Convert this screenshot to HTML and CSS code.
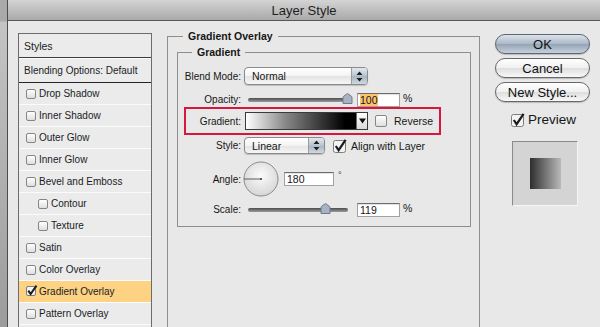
FILE: index.html
```html
<!DOCTYPE html>
<html lang="en">

<head>
  <meta charset="UTF-8">
  <title>Layer Style</title>
  <link rel="stylesheet" href="styles.css">
</head>

<body>

  <div class="desk">
    <div class="edge"></div>

    <div class="window">
      <div class="titlebar">Layer Style</div>

      <div class="dialog">

        <ul class="styles">
          <li class="head">Styles</li>
          <li class="blend">Blending Options: Default</li>
          <li><span class="box"></span>Drop Shadow</li>
          <li><span class="box"></span>Inner Shadow</li>
          <li><span class="box"></span>Outer Glow</li>
          <li><span class="box"></span>Inner Glow</li>
          <li><span class="box"></span>Bevel and Emboss</li>
          <li class="sub"><span class="box"></span>Contour</li>
          <li class="sub"><span class="box"></span>Texture</li>
          <li><span class="box"></span>Satin</li>
          <li><span class="box"></span>Color Overlay</li>
          <li class="on">
            <svg class="tick" width="12" height="12" viewBox="0 0 12 12">
              <rect x="0.5" y="1.5" width="9" height="9" rx="1.5" fill="#f4f4f4" stroke="#7c7c7c"/>
              <path d="M2.3 5.6 L4.6 9 L10.5 0.6" fill="none" stroke="#1c1c1c" stroke-width="2"/>
            </svg>Gradient Overlay
          </li>
          <li><span class="box"></span>Pattern Overlay</li>
          <li class="rest"></li>
        </ul>

        <fieldset class="group outer">
          <legend>Gradient Overlay</legend>

          <fieldset class="group inner">
            <legend>Gradient</legend>

            <div class="row r-blend">
              <span class="lbl">Blend Mode:</span>
              <div class="popup p-blend">
                <span class="val">Normal</span>
                <span class="stepper">
                  <svg width="7" height="11" viewBox="0 0 7 11">
                    <path d="M3.5 0.5 L6.5 4 L0.5 4 Z M3.5 10.5 L6.5 7 L0.5 7 Z" fill="#1e1e1e"/>
                  </svg>
                </span>
              </div>
            </div>

            <div class="row r-opacity">
              <span class="lbl">Opacity:</span>
              <div class="slider s-opacity">
                <div class="track"></div>
                <svg class="thumb" style="left: 94px" width="11" height="11" viewBox="0 0 11 11">
                  <path d="M1 10.5 L1 4.5 Q1 3.5 2 3 L5.5 0.5 L9 3 Q10 3.5 10 4.5 L10 10.5 Z" fill="#a7b3c2" stroke="#6f7b8a"/>
                </svg>
              </div>
              <span class="field f-pct"><mark>100</mark></span>
              <span class="unit">%</span>
            </div>

            <div class="row r-gradient">
              <span class="lbl">Gradient:</span>
              <div class="swatch">
                <span class="ramp"></span>
                <span class="drop">
                  <svg width="7" height="6" viewBox="0 0 7 6">
                    <path d="M0 0.5 L7 0.5 L3.5 5.5 Z" fill="#111"/>
                  </svg>
                </span>
              </div>
              <span class="box box-lg r-reverse"></span>
              <span class="opt">Reverse</span>
            </div>

            <div class="row r-style">
              <span class="lbl">Style:</span>
              <div class="popup p-style">
                <span class="val">Linear</span>
                <span class="stepper">
                  <svg width="7" height="11" viewBox="0 0 7 11">
                    <path d="M3.5 0.5 L6.5 4 L0.5 4 Z M3.5 10.5 L6.5 7 L0.5 7 Z" fill="#1e1e1e"/>
                  </svg>
                </span>
              </div>
              <svg class="tick tick-lg" width="14" height="14" viewBox="0 0 14 14">
                <rect x="0.5" y="1.5" width="12" height="12" rx="2" fill="#f3f3f3" stroke="#7c7c7c"/>
                <path d="M2.8 7 L5.6 11.2 L12.6 0.8" fill="none" stroke="#1c1c1c" stroke-width="2.2"/>
              </svg>
              <span class="opt">Align with Layer</span>
            </div>

            <div class="row r-angle">
              <span class="lbl">Angle:</span>
              <svg class="dial" width="36" height="36" viewBox="0 0 36 36">
                <defs>
                  <radialGradient id="dialFill" cx="50%" cy="40%" r="60%">
                    <stop offset="0" stop-color="#fbfbfb"/>
                    <stop offset="1" stop-color="#d6d6d6"/>
                  </radialGradient>
                </defs>
                <circle cx="18" cy="18" r="17" fill="url(#dialFill)" stroke="#8a8a8a"/>
                <line x1="1" y1="18" x2="18" y2="18" stroke="#5a5a5a"/>
                <rect x="17" y="17" width="2" height="2" fill="#5a5a5a"/>
              </svg>
              <span class="field f-angle">180</span>
              <span class="deg">°</span>
            </div>

            <div class="row r-scale">
              <span class="lbl">Scale:</span>
              <div class="slider s-scale">
                <div class="track"></div>
                <svg class="thumb" style="left: 72px" width="11" height="11" viewBox="0 0 11 11">
                  <path d="M1 10.5 L1 4.5 Q1 3.5 2 3 L5.5 0.5 L9 3 Q10 3.5 10 4.5 L10 10.5 Z" fill="#a7b3c2" stroke="#6f7b8a"/>
                </svg>
              </div>
              <span class="field f-pct">119</span>
              <span class="unit">%</span>
            </div>

          </fieldset>
        </fieldset>

        <div class="actions">
          <button class="btn btn-default">OK</button>
          <button class="btn">Cancel</button>
          <button class="btn">New Style...</button>

          <div class="preview-check">
            <svg width="14" height="14" viewBox="0 0 14 14">
              <rect x="0.5" y="1.5" width="12" height="12" rx="2" fill="#f3f3f3" stroke="#7c7c7c"/>
              <path d="M2.8 7 L5.6 11.2 L12.6 0.8" fill="none" stroke="#1c1c1c" stroke-width="2.2"/>
            </svg>
            <span>Preview</span>
          </div>

          <div class="preview">
            <span class="sample"></span>
          </div>
        </div>

      </div>
    </div>
  </div>

</body>

</html>
```

FILE: styles.css
```css
body {
  margin: 0;
  font-family: "Liberation Sans", Arial, sans-serif;
  font-size: 10px;
  color: #161616;
}

.desk {
  display: flex;
  width: 600px;
  height: 327px;
  overflow: hidden;
}

.edge {
  width: 7px;
  border-right: 1px solid #4c4c4c;
  background: linear-gradient(#a9a9a9 0, #a9a9a9 21px, #c4c4c4 22px, #9c9c9c 100%);
}

.window {
  flex: 1;
  display: flex;
  flex-direction: column;
  background: #e8e8e8;
}

.titlebar {
  height: 20px;
  border-bottom: 1px solid #575757;
  background: linear-gradient(#d4d4d4, #a9a9a9);
  text-align: center;
  font-size: 13px;
  line-height: 21px;
  color: #1e1e1e;
}

.dialog {
  flex: 1;
  display: flex;
  align-items: flex-start;
  gap: 15px;
  padding: 12px 0 0 10px;
}

/* left list */

.styles {
  list-style: none;
  margin: 0;
  padding: 0;
  width: 132px;
  flex-shrink: 0;
  border: 1px solid #6c6c6c;
  background: #ebebeb;
}

.styles li {
  display: flex;
  align-items: center;
  gap: 3px;
  height: 21px;
  padding-left: 7px;
  border-bottom: 1px solid #fbfbfb;
  color: #1a1c26;
}

.styles .head {
  height: 23px;
  padding-left: 5px;
  border-bottom: 1px solid #3d3d3d;
  font-size: 10.5px;
}

.styles .blend {
  height: 23px;
  padding-left: 5px;
  border-top: 1px solid #fafafa;
  border-bottom: 1px solid #262626;
}

.styles .sub {
  padding-left: 19px;
}

.styles .on {
  background: #fdd283;
  gap: 1px;
}

.box {
  display: inline-block;
  box-sizing: border-box;
  width: 10px;
  height: 10px;
  border: 1px solid #868686;
  border-radius: 2px;
  background: linear-gradient(#ffffff, #dedede);
  flex-shrink: 0;
}

.box-lg {
  width: 12px;
  height: 12px;
}

.tick {
  flex-shrink: 0;
  margin-top: -2px;
}

/* group boxes */

.group {
  margin: 0;
  padding: 0;
  min-width: 0;
  box-sizing: border-box;
  border: 1px solid #8e8e8e;
}

.group legend {
  padding: 0 5px;
  font-weight: bold;
  font-size: 10.5px;
  line-height: 13px;
}

.outer {
  width: 313px;
  height: 320px;
  margin-top: -3px;
  flex-shrink: 0;
}

.outer > legend {
  margin-left: 15px;
}

.inner {
  width: 294px;
  margin: 3px 0 0 9px;
  padding-bottom: 9px;
}

.inner > legend {
  margin-left: 14px;
}

/* rows */

.row {
  display: flex;
  align-items: center;
}

.lbl {
  width: 63px;
  margin-right: 3px;
  text-align: right;
  flex-shrink: 0;
}

.r-blend {
  height: 18px;
  margin-top: 8px;
}

.r-opacity {
  height: 15px;
  margin-top: 7px;
}

.r-gradient {
  box-sizing: border-box;
  width: 257px;
  height: 28px;
  margin-left: 6px;
  border: 2px solid #d8173f;
}

.r-gradient .lbl {
  width: 55px;
  margin-right: 4px;
}

.r-style {
  height: 17px;
  margin-top: 2px;
}

.r-angle {
  height: 36px;
  margin-top: 7px;
}

.r-scale {
  height: 15px;
  margin-top: 5px;
}

/* pop-up menus */

.popup {
  display: flex;
  box-sizing: border-box;
  height: 18px;
  border: 1px solid #8a8a8a;
  border-radius: 4px;
  overflow: hidden;
  background: linear-gradient(#ffffff 0, #f3f3f3 50%, #e3e3e3 51%, #f6f6f6 100%);
  box-shadow: 0 1px 1px rgba(0, 0, 0, 0.18);
}

.p-blend {
  width: 124px;
}

.p-style {
  width: 81px;
  height: 17px;
}

.popup .val {
  flex: 1;
  padding-left: 7px;
  line-height: 16px;
  font-size: 10.5px;
}

.stepper {
  display: flex;
  align-items: center;
  justify-content: center;
  width: 15px;
  border-left: 1px solid #9a9a9a;
  background: linear-gradient(#e4e9ef 0, #b9c3cf 50%, #a8b4c2 51%, #d0d8e1 100%);
}

/* sliders */

.slider {
  position: relative;
  height: 15px;
  margin-left: 4px;
}

.s-opacity {
  width: 104px;
}

.s-scale {
  width: 100px;
}

.track {
  height: 4px;
  margin-top: 6px;
  border-radius: 2px;
  background: linear-gradient(#4d4d4d, #9b9b9b);
}

.thumb {
  position: absolute;
  top: 1px;
}

/* text fields */

.field {
  box-sizing: border-box;
  display: inline-block;
  width: 43px;
  height: 14px;
  padding-left: 2px;
  border: 1px solid #a2a2a2;
  border-top-color: #6c6c6c;
  background: #fff;
  font-size: 10.5px;
  line-height: 12px;
  box-shadow: inset 0 1px 1px rgba(0, 0, 0, 0.12);
}

.field mark {
  background: #fbc46c;
  color: #161616;
}

.s-opacity + .field {
  margin-left: 5px;
}

.s-scale + .field {
  margin-left: 9px;
}

.f-angle {
  width: 50px;
  margin-left: 5px;
}

.unit {
  margin-left: 3px;
  align-self: flex-start;
  font-size: 10.5px;
}

.deg {
  margin-left: 4px;
  align-self: flex-start;
  margin-top: 9px;
  font-size: 9px;
  color: #333;
}

/* gradient swatch */

.swatch {
  display: flex;
  box-sizing: border-box;
  width: 123px;
  height: 18px;
  border: 1px solid #3a3a3a;
}

.ramp {
  flex: 1;
  background: linear-gradient(to right, #ffffff 0, #8a8a8a 35%, #000000 90%);
}

.drop {
  display: flex;
  align-items: center;
  justify-content: center;
  width: 10px;
  border-left: 1px solid #6a6a6a;
  background: linear-gradient(#ffffff, #d9d9d9);
}

.r-reverse {
  margin-left: 7px;
}

.opt {
  margin-left: 7px;
  font-size: 10.5px;
}

.tick-lg {
  margin-left: 8px;
  margin-top: 0;
}

.r-style .opt {
  margin-left: 4px;
}

.dial {
  margin-left: -1px;
}

/* right column */

.actions {
  display: flex;
  flex-direction: column;
  width: 95px;
  margin-top: 1px;
  gap: 4px;
}

.btn {
  height: 20px;
  padding: 0;
  border: 1px solid #686868;
  border-radius: 10px;
  background: linear-gradient(#ffffff 0, #f0f0f0 50%, #dedede 51%, #f8f8f8 100%);
  box-shadow: 0 1px 1px rgba(0, 0, 0, 0.2);
  font-family: "Liberation Sans", Arial, sans-serif;
  font-size: 13px;
  color: #111;
}

.btn-default {
  border-color: #5d6673;
  background: linear-gradient(#dce3eb 0, #aab7c6 50%, #94a3b5 51%, #c6d0dc 100%);
}

.preview-check {
  display: flex;
  align-items: center;
  gap: 3px;
  margin: 6px 0 0 16px;
  font-size: 13.5px;
}

.preview {
  display: flex;
  align-items: center;
  justify-content: center;
  box-sizing: border-box;
  width: 66px;
  height: 65px;
  margin: 10px 0 0 17px;
  border: 1px solid #f6f6f6;
  border-top-color: #8a8a8a;
  border-left-color: #8a8a8a;
  background: #d4d4d4;
}

.sample {
  width: 31px;
  height: 31px;
  background: linear-gradient(to right, #2e2e2e, #b9b9b9);
}
```
